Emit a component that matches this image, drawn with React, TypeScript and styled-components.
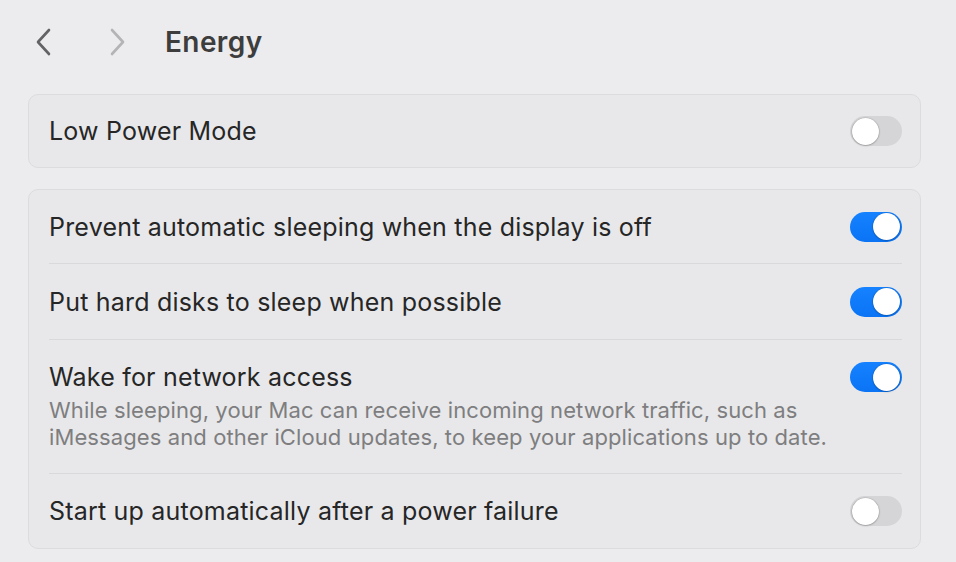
import styled, { createGlobalStyle } from 'styled-components'

const GlobalStyle = createGlobalStyle`
  html, body {
    margin: 0;
    padding: 0;
    background: #ececee;
  }
  body {
    font-family: Inter, "Noto Sans", "Liberation Sans", sans-serif;
    color: #262626;
    -webkit-font-smoothing: antialiased;
  }
`

const Page = styled.div`
  width: 956px;
  height: 562px;
  overflow: hidden;
  padding: 0 35px 0 28px;
  box-sizing: border-box;
  display: flex;
  flex-direction: column;
  gap: 21px;
`

const Header = styled.div`
  height: 94px;
  margin-bottom: -21px;
  display: flex;
  align-items: center;
  padding-left: 6px;
  padding-bottom: 11px;
  box-sizing: border-box;
`

const NavButton = styled.button<{ $dim?: boolean }>`
  width: 20px;
  height: 30px;
  padding: 0;
  border: none;
  background: none;
  display: flex;
  align-items: center;
  justify-content: center;
  color: ${(p) => (p.$dim ? '#b4b4b6' : '#636366')};
  margin-right: ${(p) => (p.$dim ? '38px' : '53px')};
`

const Title = styled.h1`
  margin: 0;
  font-size: 28px;
  font-weight: 600;
  color: #3d3d3d;
  letter-spacing: 0.4px;
`

const Card = styled.div`
  background: #e8e8ea;
  border: 1px solid #dcdcde;
  border-radius: 10px;
  padding: 0 18px 0 20px;
`

const Row = styled.div<{ $h: number }>`
  min-height: ${(p) => p.$h}px;
  box-sizing: border-box;
  display: flex;
  align-items: center;
  justify-content: space-between;
  gap: 20px;
  & + & {
    border-top: 1px solid #d9d9db;
  }
`

const TopRow = styled(Row)`
  align-items: flex-start;
  padding: 22px 0 18px;
`

const Texts = styled.div`
  display: flex;
  flex-direction: column;
`

const Label = styled.div`
  font-size: 25px;
  line-height: 30px;
  letter-spacing: 0.2px;
  color: #262626;
`

const Desc = styled.div`
  font-size: 22px;
  line-height: 27px;
  letter-spacing: 0.1px;
  color: #7e7e80;
  margin-top: 5px;
`

const Track = styled.div<{ $on: boolean }>`
  flex: none;
  width: 52px;
  height: 30px;
  border-radius: 15px;
  box-sizing: border-box;
  background: ${(p) => (p.$on ? 'linear-gradient(180deg, #1682ff, #0a74f5)' : '#d5d5d7')};
  display: flex;
  align-items: center;
  justify-content: ${(p) => (p.$on ? 'flex-end' : 'flex-start')};
  padding: 0 2px;
`

const Thumb = styled.div`
  width: 27px;
  height: 27px;
  border-radius: 50%;
  background: #fff;
  box-shadow: 0 0.5px 2px rgba(0, 0, 0, 0.35), 0 0 0 0.5px rgba(0, 0, 0, 0.08);
`

const Toggle = ({ on }: { on: boolean }) => (
  <Track $on={on}>
    <Thumb />
  </Track>
)

const Chevron = ({ dir }: { dir: 'left' | 'right' }) => (
  <svg width="20" height="30" viewBox="0 0 20 30" fill="none">
    <path
      d={dir === 'left' ? 'M15 3 L4 15 L15 27' : 'M5 3 L16 15 L5 27'}
      stroke="currentColor"
      strokeWidth="2.6"
      strokeLinecap="round"
      strokeLinejoin="round"
    />
  </svg>
)

export default function App() {
  return (
    <>
      <GlobalStyle />
      <Page>
        <Header>
          <NavButton>
            <Chevron dir="left" />
          </NavButton>
          <NavButton $dim>
            <Chevron dir="right" />
          </NavButton>
          <Title>Energy</Title>
        </Header>
        <Card>
          <Row $h={72}>
            <Label>Low Power Mode</Label>
            <Toggle on={false} />
          </Row>
        </Card>
        <Card>
          <Row $h={73}>
            <Label>Prevent automatic sleeping when the display is off</Label>
            <Toggle on />
          </Row>
          <Row $h={76}>
            <Label>Put hard disks to sleep when possible</Label>
            <Toggle on />
          </Row>
          <TopRow $h={134}>
            <Texts>
              <Label>Wake for network access</Label>
              <Desc>
                While sleeping, your Mac can receive incoming network traffic, such as
                <br />
                iMessages and other iCloud updates, to keep your applications up to date.
              </Desc>
            </Texts>
            <Toggle on />
          </TopRow>
          <Row $h={75}>
            <Label>Start up automatically after a power failure</Label>
            <Toggle on={false} />
          </Row>
        </Card>
      </Page>
    </>
  )
}
